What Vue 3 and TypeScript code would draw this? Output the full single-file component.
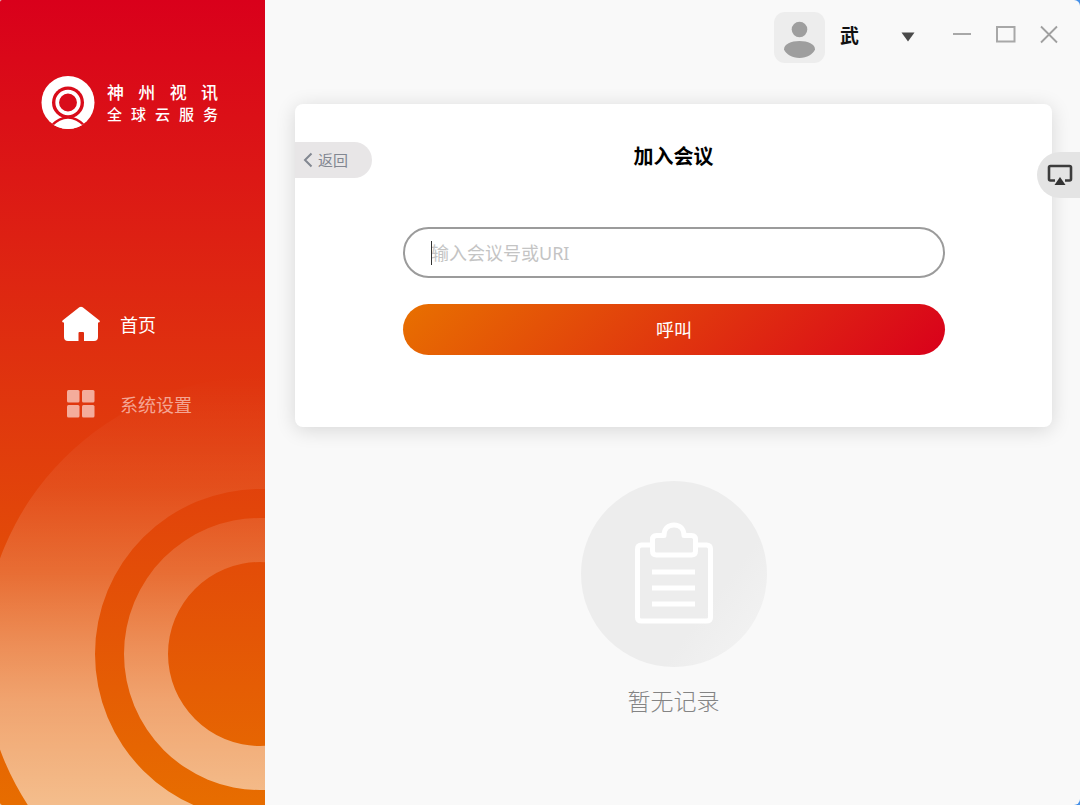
<script setup lang="ts">
import { onMounted, ref } from 'vue'

const brandTop: string[] = ['神', '州', '视', '讯']
const brandBottom: string[] = ['全', '球', '云', '服', '务']
const meeting = ref('')
const field = ref<HTMLInputElement | null>(null)

onMounted(() => field.value?.focus())
</script>

<template>
  <div class="app">
    <aside class="sidebar">
      <svg class="rings" width="265" height="430" viewBox="0 0 265 430" aria-hidden="true">
        <defs>
          <linearGradient id="haze" gradientUnits="userSpaceOnUse" x1="0" y1="0" x2="0" y2="430">
            <stop offset="0" stop-color="#fff" stop-opacity="0" />
            <stop offset="0.26" stop-color="#fff" stop-opacity="0.07" />
            <stop offset="0.46" stop-color="#fff" stop-opacity="0.18" />
            <stop offset="0.62" stop-color="#fff" stop-opacity="0.32" />
            <stop offset="0.76" stop-color="#fff" stop-opacity="0.43" />
            <stop offset="1" stop-color="#fff" stop-opacity="0.55" />
          </linearGradient>
        </defs>
        <path fill="url(#haze)" fill-rule="evenodd" d="M-17 279a277 277 0 1 0 554 0a277 277 0 1 0-554 0ZM95 279a165 165 0 1 0 330 0a165 165 0 1 0-330 0Z" />
        <path fill="url(#haze)" fill-rule="evenodd" d="M124 279a136 136 0 1 0 272 0a136 136 0 1 0-272 0ZM168 279a92 92 0 1 0 184 0a92 92 0 1 0-184 0Z" />
      </svg>
      <div class="brand">
        <svg width="54" height="54" viewBox="0 0 54 54" aria-hidden="true">
          <defs>
            <clipPath id="disc"><circle cx="27" cy="26.500" r="26.500" /></clipPath>
          </defs>
          <g clip-path="url(#disc)">
            <rect width="54" height="54" fill="#fff" />
            <circle cx="27" cy="26.500" r="16" fill="#d90c1a" />
            <circle cx="27" cy="26.500" r="10.800" fill="none" stroke="#fff" stroke-width="3.700" />
            <path d="M10 50Q27 33 44 50L47 54H7Z" fill="#fff" />
            <path d="M10 50Q27 33 44 50" fill="none" stroke="#d90c1a" stroke-width="2.400" />
          </g>
        </svg>
        <div class="brand-text">
          <div class="line top"><span v-for="c in brandTop" :key="c">{{ c }}</span></div>
          <div class="line bottom"><span v-for="c in brandBottom" :key="c">{{ c }}</span></div>
        </div>
      </div>
      <nav class="menu">
        <a class="item active" href="#home">
          <svg width="40" height="36" viewBox="0 0 40 36" aria-hidden="true">
            <path fill="#fff" d="M18.300 1.300Q20 0 21.700 1.300L38.500 14.500Q39.500 15.800 38 16.600H37V31Q37 35 33 35H23V27Q23 26 22 26H18.500Q17.500 26 17.500 27V35H7Q3 35 3 31V16.600H2Q0.500 15.800 1.500 14.500Z" />
          </svg>
          <span>首页</span>
        </a>
        <a class="item" href="#settings">
          <svg width="40" height="36" viewBox="0 0 40 36" aria-hidden="true">
            <g fill="#f4ac9b">
              <rect x="6" y="4" width="12.500" height="12.500" rx="1.500" />
              <rect x="21" y="4" width="12.500" height="12.500" rx="1.500" />
              <rect x="6" y="19" width="12.500" height="12.500" rx="1.500" />
              <rect x="21" y="19" width="12.500" height="12.500" rx="1.500" />
            </g>
          </svg>
          <span>系统设置</span>
        </a>
      </nav>
    </aside>

    <main class="main">
      <header class="bar">
        <button class="user" type="button">
          <svg class="avatar" width="51" height="51" viewBox="0 0 51 51" aria-hidden="true">
            <rect width="51" height="51" rx="11" fill="#ededed" />
            <circle cx="25.500" cy="17.500" r="7.800" fill="#9e9e9e" />
            <path fill="#9e9e9e" d="M10 37.500C10 32 17 29 25.500 29S41 32 41 37.500C39 42 33 46 25.500 46S12 42 10 37.500Z" />
          </svg>
          <span class="name">武</span>
          <svg class="caret" width="14" height="10" viewBox="0 0 14 10" aria-hidden="true">
            <path d="M0.500 0.500H13.500L7 9.500Z" fill="#4a4a4a" />
          </svg>
        </button>
        <div class="window">
          <button type="button" aria-label="最小化">
            <svg width="20" height="20" viewBox="0 0 20 20"><path d="M1 9H19" stroke="#a8a8a8" stroke-width="2" /></svg>
          </button>
          <button type="button" aria-label="最大化">
            <svg width="20" height="20" viewBox="0 0 20 20"><rect x="1" y="2" width="17.500" height="14.500" fill="none" stroke="#a8a8a8" stroke-width="2" /></svg>
          </button>
          <button type="button" aria-label="关闭">
            <svg width="20" height="20" viewBox="0 0 20 20"><path d="M1 1.500L17 17.500M17 1.500L1 17.500" stroke="#a0a0a0" stroke-width="1.800" /></svg>
          </button>
        </div>
      </header>

      <section class="card">
        <button class="back" type="button">
          <svg width="10" height="16" viewBox="0 0 10 16" aria-hidden="true">
            <path d="M8.500 1.500L2 8L8.500 14.500" fill="none" stroke="#828791" stroke-width="2" />
          </svg>
          <span>返回</span>
        </button>
        <h1>加入会议</h1>
        <form class="form" @submit.prevent>
          <div class="field">
            <input ref="field" v-model="meeting" type="text" aria-label="会议号" placeholder="输入会议号或URI" />
            <i v-if="!meeting" class="cursor" aria-hidden="true"></i>
          </div>
          <button class="call" type="submit">呼叫</button>
        </form>
      </section>

      <button class="cast" type="button" aria-label="投屏">
        <svg width="26" height="22" viewBox="0 0 26 22" aria-hidden="true">
          <path d="M8 16.500H3.500Q2 16.500 2 15V3.500Q2 2 3.500 2H22.500Q24 2 24 3.500V15Q24 16.500 22.500 16.500H18" fill="none" stroke="#3c3c3c" stroke-width="2.600" />
          <path d="M13 13L18.500 21H7.500Z" fill="#333" />
        </svg>
      </button>

      <section class="empty">
        <svg width="186" height="186" viewBox="0 0 186 186" aria-hidden="true">
          <defs>
            <linearGradient id="plate" x1="0.100" y1="0.200" x2="0.900" y2="0.800">
              <stop offset="0.750" stop-color="#ededed" />
              <stop offset="1" stop-color="#f1f1f1" />
            </linearGradient>
          </defs>
          <circle cx="93" cy="93" r="93" fill="url(#plate)" />
          <g fill="none" stroke="#fff" stroke-width="5" stroke-linejoin="round">
            <path d="M71.500 64H60.500Q56.500 64 56.500 68V136.500Q56.500 140 60.500 140H125.500Q129.500 140 129.500 136.500V68Q129.500 64 125.500 64H114.500" />
            <path d="M83 54.500H75.500Q71.500 54.500 71.500 58.500V70Q71.500 74 75.500 74H110.500Q114.500 74 114.500 70V58.500Q114.500 54.500 110.500 54.500H103C103 48 99 44 93 44S83 48 83 54.500Z" />
            <path d="M71 91H114M71 107H114M71 123H114" />
          </g>
        </svg>
        <p>暂无记录</p>
      </section>
    </main>
  </div>
</template>

<style>
body {
  margin: 0;
  background: linear-gradient(90deg, #d8d8d8 50%, #4590e8 50%);
}
</style>

<style scoped>
.app {
  display: flex;
  min-height: 100vh;
  overflow: hidden;
  border-radius: 2px 6px 6px 2px;
  font-family: "Noto Sans", "Noto Sans CJK SC", sans-serif;
  background: #f9f9f9;
}
button {
  padding: 0;
  border: 0;
  background: none;
  font-family: inherit;
}
svg {
  display: block;
  flex: none;
}
.sidebar {
  position: relative;
  flex: none;
  width: 265px;
  overflow: hidden;
  background: linear-gradient(#d9001b, #e76d00);
}
.rings {
  position: absolute;
  right: 0;
  bottom: 0;
}
.brand {
  position: relative;
  display: flex;
  gap: 12px;
  padding: 76px 0 0 41px;
  color: #fff;
}
.brand-text {
  width: 111px;
  padding-top: 5px;
}
.line {
  display: flex;
  justify-content: space-between;
  font-weight: 500;
}
.top {
  font-size: 17px;
  line-height: 24px;
}
.bottom {
  font-size: 15px;
  line-height: 18px;
}
.menu {
  position: relative;
  display: flex;
  flex-direction: column;
  gap: 40px;
  padding: 174px 0 0 61px;
}
.item {
  display: flex;
  align-items: center;
  gap: 19px;
  height: 40px;
  font-size: 18px;
  color: #f4a594;
  text-decoration: none;
}
.active {
  color: #fff;
}
.main {
  position: relative;
  flex: 1;
  min-width: 0;
}
.bar {
  display: flex;
  justify-content: flex-end;
  align-items: center;
  gap: 37px;
  height: 51px;
  padding: 12px 20px 0 0;
}
.user {
  display: flex;
  align-items: center;
}
.name {
  margin: 0 42px 4px 15px;
  font-size: 19px;
  line-height: 28px;
  font-weight: 700;
  color: #111;
}
.caret {
  margin-bottom: 2px;
}
.window {
  display: flex;
  gap: 24px;
  padding-bottom: 6px;
}
.card {
  position: relative;
  margin: 41px 28px 0 30px;
  padding: 38px 0 72px;
  border-radius: 8px;
  background: #fff;
  box-shadow: 0 3px 20px rgba(0, 0, 0, 0.14);
}
.back {
  position: absolute;
  left: 0;
  top: 38px;
  display: flex;
  align-items: center;
  gap: 5px;
  width: 77px;
  height: 36px;
  padding-left: 8px;
  border-radius: 0 18px 18px 0;
  background: #e8e6e7;
  color: #828791;
  font-size: 15px;
}
.back span,
.call {
  padding-bottom: 2px;
}
h1 {
  margin: 0;
  font-size: 20px;
  line-height: 30px;
  font-weight: 700;
  text-align: center;
  color: #000;
}
.form {
  display: flex;
  flex-direction: column;
  gap: 26px;
  margin: 55px 107px 0 108px;
}
.field {
  position: relative;
}
input {
  display: block;
  box-sizing: border-box;
  width: 100%;
  height: 51px;
  padding: 0 26px;
  border: 2px solid #9b9b9b;
  border-radius: 26px;
  outline: none;
  background: #fff;
  font-family: inherit;
  font-size: 18px;
  color: #333;
  caret-color: transparent;
}
input:not(:placeholder-shown) {
  caret-color: #333;
}
input::placeholder {
  color: #c4c4c4;
  opacity: 1;
}
.cursor {
  position: absolute;
  left: 28px;
  top: 14px;
  width: 1px;
  height: 24px;
  background: #333;
}
.call {
  height: 51px;
  border-radius: 26px;
  background: linear-gradient(135deg, #e87000, #d9001b);
  color: #fff;
  font-size: 18px;
}
.cast {
  position: absolute;
  right: 0;
  top: 152px;
  display: flex;
  align-items: center;
  width: 43px;
  height: 46px;
  padding-left: 10px;
  border-radius: 23px 0 0 23px;
  background: #e4e4e4;
}
.empty {
  display: flex;
  flex-direction: column;
  align-items: center;
  padding: 54px 0 0 2px;
}
.empty p {
  margin: 17px 0 0;
  font-size: 23px;
  line-height: 34px;
  font-weight: 300;
  color: #848484;
}
</style>
